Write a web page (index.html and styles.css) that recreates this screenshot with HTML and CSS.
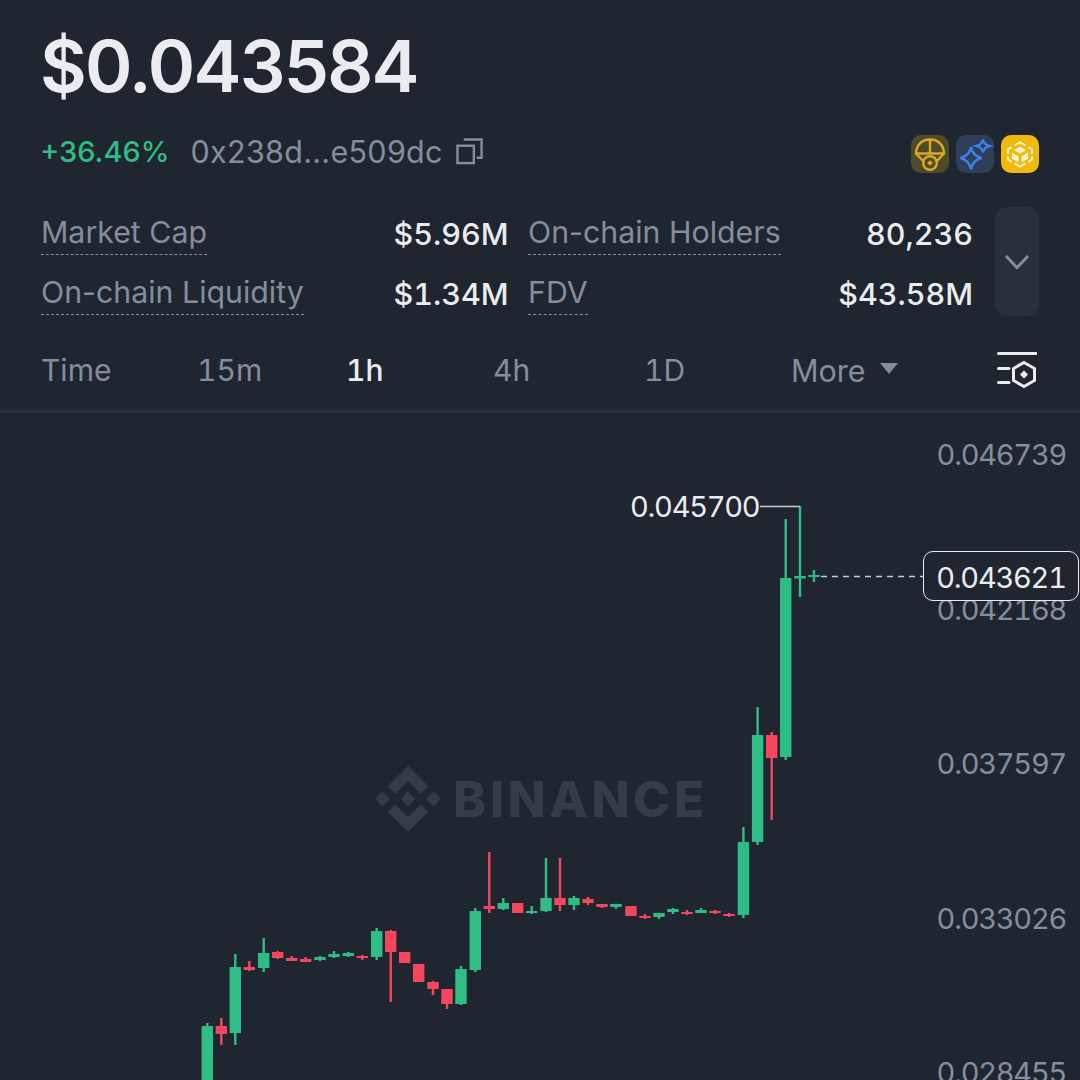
FILE: index.html
```html
<!DOCTYPE html>
<html lang="en">
<head>
<meta charset="UTF-8" />
<meta name="viewport" content="width=device-width, initial-scale=1" />
<title>Token price chart</title>
<link rel="stylesheet" href="styles.css">
</head>
<body>

  <!-- price header -->
  <header class="head">
    <h1 class="price">$0.043584</h1>
    <div class="meta">
      <span class="change">+36.46%</span>
      <span class="address">0x238d...e509dc</span>
      <svg class="copy" viewBox="0 0 28 28" aria-hidden="true">
        <path d="M8 1.5H26.5V20.5H21.5"/>
        <rect x="1.5" y="8" width="17" height="18"/>
      </svg>
      <div class="badges">
        <svg class="badge badge-gold" viewBox="0 0 38 38" aria-hidden="true">
          <path d="M5 18.5C5 10 11 4.5 19 4.5S33 10 33 18.5ZM19 4.5V18.5M5 18.5L13 27M33 18.5L25 27"/>
          <circle cx="19" cy="28" r="6.8"/>
          <path class="solid" d="M19 25.2L21.8 28L19 30.8L16.2 28Z"/>
        </svg>
        <svg class="badge badge-blue" viewBox="0 0 38 38" aria-hidden="true">
          <path d="M15 12C16 17.5 19.5 21.5 25.5 23C19.5 24.5 16 28.500 15 34.500C14 28.500 10.500 24.500 4.500 23C10.500 21.500 14 17.500 15 12Z"/>
          <path class="solid" d="M27 4.500C27.500 7.800 29.800 10 33.500 11C29.800 12 27.500 14.300 27 17.500C26.500 14.300 24.200 12 20.500 11C24.200 10 26.500 7.800 27 4.500Z"/>
        </svg>
        <svg class="badge badge-bnb" viewBox="0 0 38 38" aria-hidden="true">
          <path class="cube-line" d="M13.500 10.500L19 7.300L24.500 10.500M27 12L31 14.300V19M31 21.500V24.500L27 26.800M24.500 28.300L19 31.500L13.500 28.300M11 26.800L7 24.500V21.500M7 19V14.300L11 12"/>
          <path class="solid" d="M19 11.500L25 15L19 18.500L13 15Z"/>
          <path class="solid" d="M11 17.500L17.500 21.200V27.500L11 23.800Z"/>
          <path class="solid" d="M27 17.500L20.500 21.200V27.500L27 23.800Z"/>
        </svg>
      </div>
    </div>
  </header>

  <!-- market stats -->
  <section class="stats">
    <div class="stats-grid">
      <div class="stat"><span class="stat-label">Market Cap</span><span class="stat-value">$5.96M</span></div>
      <div class="stat"><span class="stat-label">On-chain Holders</span><span class="stat-value">80,236</span></div>
      <div class="stat"><span class="stat-label">On-chain Liquidity</span><span class="stat-value">$1.34M</span></div>
      <div class="stat"><span class="stat-label">FDV</span><span class="stat-value">$43.58M</span></div>
    </div>
    <div class="expand">
      <svg class="chevron" viewBox="0 0 26 16" aria-hidden="true"><path d="M2 2L13 13.500L24 2"/></svg>
    </div>
  </section>

  <!-- interval tabs -->
  <nav class="tabs">
    <span class="tab">Time</span>
    <span class="tab">15m</span>
    <span class="tab active">1h</span>
    <span class="tab">4h</span>
    <span class="tab">1D</span>
    <span class="tab tab-more">More<i class="caret"></i></span>
    <svg class="settings" viewBox="0 0 40 40" aria-hidden="true">
      <path d="M1.500 3.500H39M1.500 18.500H12M1.500 32.500H12"/>
      <path d="M27 12.500L37.500 18.500V30.500L27 36.500L16.500 30.500V18.500Z"/>
      <path class="solid" d="M27 20.500L31 24.500L27 28.500L23 24.500Z"/>
    </svg>
  </nav>

  <!-- candlestick chart, svg coordinates are page pixels -->
  <main class="chart">
    <svg class="plot" viewBox="0 413 1080 667" aria-hidden="true">
      <g class="watermark">
        <path transform="translate(375 766) scale(0.5213)" d="M38.73 53.2l24.59-24.58 24.6 24.6 14.3-14.31L63.32 0 24.42 38.9zM0 63.31l14.3-14.31 14.31 14.31-14.31 14.3zM38.73 73.41l24.59 24.59 24.6-24.6 14.31 14.29-38.9 38.91-38.91-38.88-.02-.02zM98.01 63.31l14.3-14.31 14.3 14.3-14.3 14.31zM77.83 63.3L63.32 48.78 52.59 59.51l-1.24 1.23-2.54 2.54 14.51 14.52 14.51-14.5z"/>
      </g>
      <g class="up">
        <path class="wick" d="M207.300 1023V1080M235.300 954V1045M263.700 938V972M320 956V961M334 951V958M348.300 952V957M376.700 928V960M461 966V1005M475.300 908V972M503.300 898V910M531.700 906V914M546 858V912M574 896V910M616 904V909M659 913V919M673 908V914M701 908V913M743.400 827V918M757.600 707V845M785.700 519V760M800 506V597M814 570V582"/>
        <path class="body" d="M207.300 1026V1080M235.300 967V1033M263.700 953V968M320 957V960M334 954V957M348.300 953V956M376.700 931V957M461 969V1004M475.300 911V970M503.300 903V909M531.700 911V913M546 898V911M574 898V905M616 904V907M659 913V917M673 909V912M701 910V913M743.400 842V915M757.600 735V842M785.700 578V757M800 576V578.500M814 575V577"/>
      </g>
      <g class="down">
        <path class="wick" d="M221.300 1018V1045M249.300 961V971M277.700 951V959M291.700 956V961M305.700 957V962M362.300 955V960M390.700 930V1002M433 981V995M447 989V1009M489.300 852V913M560 858V911M588 897V905M602 904V908M645 914V919M687 910V915M715 910V914M729 913V917M771.700 732V820"/>
        <path class="body" d="M221.300 1026V1034M249.300 967V970M277.700 952V958M291.700 958V961M305.700 959V962M362.300 956V958M390.700 931V952M404.700 952V963M418.700 964V982M433 982V989M447 989V1004M489.300 906V909M517.700 903V913M560 898V905M588 899V903M602 904V907M631 906V916M645 916V918M687 912V914M715 911V913M729 914V916M771.700 735V758"/>
      </g>
      <path class="max-line" d="M760 506.500H800"/>
      <path class="last-line" d="M821 576.500H923"/>
    </svg>
    <span class="wordmark">BINANCE</span>
    <span class="max-label">0.045700</span>
    <div class="axis">
      <span>0.046739</span>
      <span>0.042168</span>
      <span>0.037597</span>
      <span>0.033026</span>
      <span>0.028455</span>
    </div>
    <span class="last-price">0.043621</span>
  </main>

</body>
</html>
```

FILE: styles.css
```css
* {
  box-sizing: border-box;
}
html, body {
  height: 100%;
}
body {
  margin: 0;
  overflow: hidden;
  background: #202630;
  color: #eaecef;
  font-family: Inter, "Noto Sans", sans-serif;
  display: flex;
  flex-direction: column;
}

/* header */
.head {
  padding: 30px 41px 0 40px;
}
.price {
  margin: 0;
  font-size: 72px;
  line-height: 72px;
  font-weight: 600;
  letter-spacing: -1.800px;
}
.meta {
  display: flex;
  align-items: center;
  height: 44px;
  margin-top: 27px;
  font-size: 29px;
}
.change {
  color: #2ebd85;
  font-weight: 500;
}
.address {
  margin-left: 21px;
  font-size: 30.500px;
  letter-spacing: 0.300px;
  color: #848e9c;
}
.copy {
  width: 27px;
  height: 27px;
  margin-left: 13px;
  fill: none;
  stroke: #848e9c;
  stroke-width: 2.5;
}
.badges {
  display: flex;
  gap: 7px;
  margin-left: auto;
  margin-top: 6px;
}
.badge {
  width: 38px;
  height: 38px;
  border-radius: 10px;
  fill: none;
  stroke-width: 2.4;
}
.badge-gold {
  background: #4e4a2c;
  stroke: #dcab1a;
}
.badge-gold .solid {
  fill: #dcab1a;
  stroke: none;
}
.badge-blue {
  background: #2f3f57;
  stroke: #3b82e6;
}
.badge-blue .solid {
  stroke-width: 2.4;
}
.badge-bnb {
  background: #f0b90b;
}
.badge-bnb .solid {
  fill: #fdf3cf;
}
.cube-line {
  stroke: #fdf3cf;
  stroke-width: 2;
}

/* stats */
.stats {
  display: flex;
  padding: 34px 41px 0 41px;
  height: 154px;
}
.stats-grid {
  display: grid;
  grid-template-columns: 467.500px 445px;
  grid-auto-rows: 60px;
  column-gap: 19.500px;
  width: 932px;
  margin-top: -4px;
}
.stat {
  display: flex;
  justify-content: space-between;
  align-items: center;
}
.stat-label {
  font-size: 30.300px;
  line-height: 43px;
  color: #848e9c;
  border-bottom: 1px dashed #848e9c;
}
.stat-value {
  font-size: 30.500px;
  font-variant-numeric: tabular-nums;
  font-weight: 500;
}
.expand {
  display: flex;
  align-items: center;
  justify-content: center;
  width: 44px;
  height: 109px;
  margin-left: 22px;
  border-radius: 12px;
  background: #2a303a;
}
.chevron {
  width: 26px;
  height: 16px;
  fill: none;
  stroke: #848e9c;
  stroke-width: 3;
}

/* tabs */
.tabs {
  display: grid;
  grid-template-columns: 156px 149px 147px 151px 147px 206px auto;
  align-items: center;
  height: 86px;
  padding: 3px 0 0 41px;
  border-bottom: 3px solid #2b3139;
  font-size: 30px;
  font-variant-numeric: tabular-nums;
  color: #848e9c;
}
.active {
  color: #eaecef;
  font-weight: 500;
}
.tab-more {
  display: flex;
  align-items: center;
  font-size: 30.500px;
}
.caret {
  width: 0;
  height: 0;
  margin-left: 14px;
  margin-top: -4px;
  border-left: 9px solid transparent;
  border-right: 9px solid transparent;
  border-top: 11px solid #848e9c;
}
.settings {
  width: 40px;
  height: 40px;
  fill: none;
  stroke: #eaecef;
  stroke-width: 3;
  stroke-linecap: round;
}
.settings .solid {
  fill: #eaecef;
  stroke: none;
}

/* chart */
.chart {
  position: relative;
  flex: 1;
  overflow: hidden;
}
.plot {
  position: absolute;
  left: 0;
  top: 0;
  width: 1080px;
  height: 667px;
}
.watermark {
  fill: #363c46;
}
.wick {
  fill: none;
  stroke-width: 2.4;
}
.body {
  fill: none;
  stroke-width: 11.4;
}
.up path {
  stroke: #2ebd85;
}
.down path {
  stroke: #f6465d;
}
.max-line {
  fill: none;
  stroke: #c9ccd1;
  stroke-width: 1.500;
}
.last-line {
  fill: none;
  stroke: #c9ccd1;
  stroke-width: 1.500;
  stroke-dasharray: 6 5;
}
.wordmark {
  position: absolute;
  left: 453px;
  top: 356px;
  font-size: 50px;
  line-height: 60px;
  font-weight: 800;
  letter-spacing: 3.500px;
  color: #363c46;
}
.max-label {
  position: absolute;
  left: 630px;
  top: 74px;
  font-size: 29px;
  line-height: 40px;
  font-variant-numeric: tabular-nums;
  letter-spacing: -1.250px;
  color: #eaecef;
}
.axis {
  position: absolute;
  right: 14px;
  top: 22px;
  display: flex;
  flex-direction: column;
  gap: 114.500px;
  font-size: 29px;
  line-height: 40px;
  font-variant-numeric: tabular-nums;
  letter-spacing: -1.250px;
  text-align: right;
  color: #848e9c;
}
.last-price {
  position: absolute;
  left: 923px;
  top: 138px;
  width: 156px;
  height: 50px;
  border: 1px solid #eaecef;
  border-radius: 10px;
  background: #202630;
  font-size: 29px;
  line-height: 51px;
  font-variant-numeric: tabular-nums;
  letter-spacing: -1.250px;
  text-align: center;
}
```
